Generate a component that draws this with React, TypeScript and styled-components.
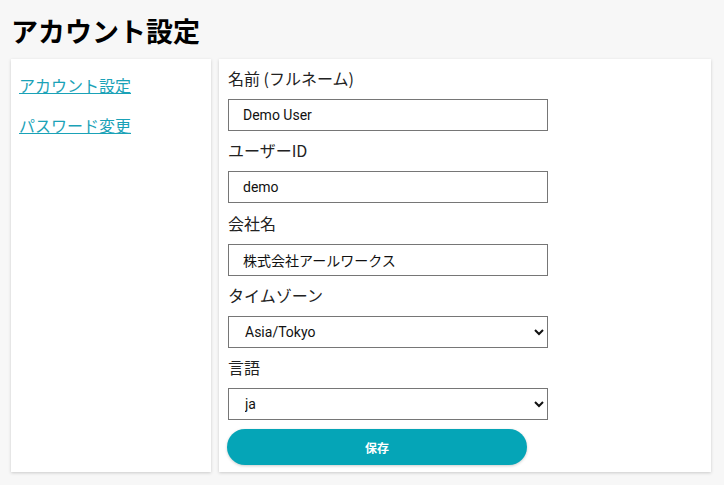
import { createGlobalStyle } from "styled-components";
import styled from "styled-components";

const GlobalStyle = createGlobalStyle`
  html, body {
    margin: 0;
    padding: 0;
    background: #f7f7f7;
    font-family: "Noto Sans CJK JP", "Noto Sans", sans-serif;
    color: #111;
  }
`;

const Page = styled.div`
  padding: 0 13px 12px 11px;
`;

const Title = styled.h1`
  margin: 0;
  padding: 12px 0 0;
  height: 59px;
  box-sizing: border-box;
  font-size: 27px;
  line-height: 38px;
  font-weight: 700;
  color: #000;
`;

const Columns = styled.div`
  display: flex;
  gap: 8px;
  align-items: stretch;
`;

const Card = styled.div`
  background: #fff;
  box-shadow: 0 1px 3px rgba(0, 0, 0, 0.18);
`;

const SideNav = styled(Card)`
  width: 200px;
  padding: 14px 8px;
  box-sizing: border-box;
  display: flex;
  flex-direction: column;
  gap: 16px;
`;

const NavLink = styled.a`
  font-size: 16px;
  line-height: 24px;
  color: #1aa2b7;
  text-decoration: underline;
  cursor: pointer;
`;

const FormCard = styled(Card)`
  flex: 1;
  padding: 8px 9px 7px 9px;
  display: flex;
  flex-direction: column;
`;

const Label = styled.label`
  display: block;
  font-size: 16px;
  line-height: 22px;
  margin-bottom: 10px;
  color: #222;
`;

const Field = styled.div`
  margin-bottom: 8.25px;
`;

const TextInput = styled.input`
  box-sizing: border-box;
  width: 320px;
  height: 32px;
  border: 1px solid #767676;
  padding: 0 14px;
  font-family: Roboto, "Noto Sans CJK JP", sans-serif;
  font-size: 14px;
  color: #111;
  background: #fff;
`;

const Select = styled.select`
  box-sizing: border-box;
  width: 320px;
  height: 32px;
  border: 1px solid #767676;
  padding: 0 12px;
  font-family: Roboto, "Noto Sans CJK JP", sans-serif;
  font-size: 14px;
  color: #111;
  background: #fff;
`;

const SaveButton = styled.button`
  margin-top: 1px;
  margin-left: -1px;
  width: 300px;
  height: 36px;
  border: none;
  border-radius: 18px;
  background: #05a5b7;
  color: #fff;
  font-family: "Noto Sans CJK JP", sans-serif;
  font-size: 12px;
  font-weight: 700;
  box-shadow: 0 1px 3px rgba(0, 0, 0, 0.2);
`;

export default function App() {
  return (
    <Page>
      <GlobalStyle />
      <Title>アカウント設定</Title>
      <Columns>
        <SideNav>
          <NavLink>アカウント設定</NavLink>
          <NavLink>パスワード変更</NavLink>
        </SideNav>
        <FormCard>
          <Field>
            <Label>名前 (フルネーム)</Label>
            <TextInput defaultValue="Demo User" />
          </Field>
          <Field>
            <Label>ユーザーID</Label>
            <TextInput defaultValue="demo" />
          </Field>
          <Field>
            <Label>会社名</Label>
            <TextInput defaultValue="株式会社アールワークス" />
          </Field>
          <Field>
            <Label>タイムゾーン</Label>
            <Select defaultValue="Asia/Tokyo">
              <option>Asia/Tokyo</option>
            </Select>
          </Field>
          <Field>
            <Label>言語</Label>
            <Select defaultValue="ja">
              <option>ja</option>
            </Select>
          </Field>
          <SaveButton>保存</SaveButton>
        </FormCard>
      </Columns>
    </Page>
  );
}
